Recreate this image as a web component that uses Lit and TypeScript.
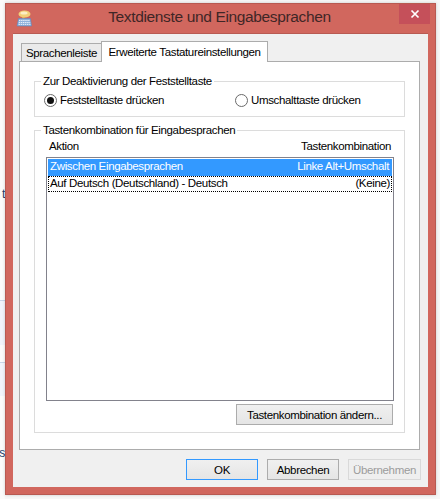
import {LitElement, html, css} from 'lit';
import {customElement} from 'lit/decorators.js';

@customElement('app-root')
export class AppRoot extends LitElement {
    static styles = css`
        :host {
            display: block;
            width: 440px;
            height: 499px;
            overflow: hidden;
            font-family: "Liberation Sans", Arial, sans-serif;
            font-size: 11.5px;
            letter-spacing: -0.35px;
            color: #000;
        }

        .desktop {
            position: relative;
            width: 440px;
            height: 499px;
            box-sizing: border-box;
            padding: 3px 0 0 5px;
            background: #f7f7f7;
        }

        .scraps {
            position: absolute;
            left: 0;
            top: 0;
            width: 5px;
            height: 499px;
            overflow: hidden;
            background: #fbfbfb;
        }

        .band {
            position: absolute;
            left: 0;
            width: 5px;
            box-sizing: border-box;
            background: #f1f4fb;
            border-top: 1px solid #c9d6e8;
        }

        .scrap-text {
            position: absolute;
            right: 0;
            font-size: 12px;
            line-height: 14px;
            color: #1d3f6b;
        }

        .window {
            position: relative;
            box-sizing: border-box;
            width: 431px;
            height: 492px;
            display: flex;
            flex-direction: column;
            background: #d1675e;
            border: 1px solid #b85a52;
            box-shadow: 0 0 3px rgba(0, 0, 0, 0.18);
        }

        .titlebar {
            position: relative;
            flex: none;
            height: 29px;
            display: flex;
            align-items: center;
            justify-content: center;
            padding-right: 2px;
        }

        .icon {
            position: absolute;
            left: 10px;
            top: 6px;
        }

        .title {
            font-size: 15.5px;
            color: #3f2626;
            padding-bottom: 3px;
        }

        .close {
            position: absolute;
            right: 5px;
            top: 0;
            width: 31px;
            height: 20px;
            display: flex;
            align-items: center;
            justify-content: center;
            background: #c5505a;
        }

        .client {
            flex: none;
            box-sizing: border-box;
            width: 415px;
            height: 454px;
            margin-left: 7px;
            padding: 7px 7px 0 6px;
            background: #f0f0f0;
            border-top: 1px solid #b85a52;
            display: flex;
            flex-direction: column;
        }

        .tabs {
            flex: none;
            height: 20px;
            display: flex;
            align-items: flex-end;
            padding-left: 2px;
            position: relative;
            z-index: 1;
        }

        .tab {
            box-sizing: border-box;
            height: 18px;
            display: flex;
            align-items: center;
            justify-content: center;
            white-space: nowrap;
            background: #eaeaea;
            border: 1px solid #acacac;
            border-bottom: none;
        }

        .tab.first {
            width: 81px;
            margin-right: -1px;
        }

        .tab.active {
            width: 167px;
            height: 21px;
            background: #fff;
            margin-bottom: -1px;
        }

        .pane {
            flex: none;
            box-sizing: border-box;
            width: 401px;
            height: 389px;
            padding: 12px 14px 0 14px;
            background: #fff;
            border: 1px solid #acacac;
            display: flex;
            flex-direction: column;
        }

        fieldset {
            margin: 0;
            padding: 0;
            min-width: 0;
            box-sizing: border-box;
            border: 1px solid #dcdcdc;
        }

        legend {
            margin-left: 6px;
            padding: 0 2px;
            line-height: 14px;
        }

        .caps {
            flex: none;
            height: 43px;
        }

        .radios {
            display: flex;
            height: 22px;
            align-items: center;
            padding: 1px 0 0 9px;
        }

        .radio {
            display: flex;
            align-items: center;
            gap: 3px;
            white-space: nowrap;
        }

        .radio.one {
            width: 191px;
        }

        .dot {
            box-sizing: border-box;
            width: 13px;
            height: 13px;
            border-radius: 50%;
            border: 1px solid #6a6a6a;
            background: #fff;
            display: flex;
            align-items: center;
            justify-content: center;
        }

        .dot i {
            width: 7px;
            height: 7px;
            border-radius: 50%;
            background: #111;
        }

        .combo {
            flex: none;
            height: 310px;
            margin-top: 6px;
        }

        .combo-body {
            display: flex;
            flex-direction: column;
            padding: 0 9px 0 11px;
        }

        .head {
            flex: none;
            height: 20px;
            display: flex;
            align-items: center;
            justify-content: space-between;
            padding: 0 4px 3px 3px;
            box-sizing: border-box;
        }

        .list {
            flex: none;
            box-sizing: border-box;
            width: 348px;
            height: 244px;
            border: 1px solid #82828c;
            padding: 1px;
        }

        .row {
            box-sizing: border-box;
            height: 17px;
            display: flex;
            align-items: center;
            justify-content: space-between;
            padding: 0 3px 3px 2px;
            white-space: nowrap;
        }

        .row.sel {
            background: #3399ff;
            color: #fff;
        }

        .row.focus {
            border: 1px dotted #000;
            height: 16px;
            padding: 0 1px 2px 1px;
        }

        .change {
            display: flex;
            justify-content: flex-end;
            padding: 3px 2px 0 0;
        }

        button {
            box-sizing: border-box;
            height: 21px;
            padding: 0;
            font: inherit;
            letter-spacing: inherit;
            color: #000;
            white-space: nowrap;
            background: linear-gradient(#f0f0f0, #e5e5e5);
            border: 1px solid #acacac;
        }

        button.wide {
            width: 157px;
        }

        .actions {
            flex: none;
            display: flex;
            justify-content: flex-end;
            gap: 9px;
            padding: 9px 0 0 0;
            width: 402px;
        }

        .actions button {
            width: 72px;
        }

        .actions button[disabled] {
            width: 73px;
        }

        button.default {
            border: 1px solid #3399ff;
        }

        button[disabled] {
            background: #efefef;
            border-color: #d9d9d9;
            color: #9c9c9c;
        }
    `;

    private renderIcon() {
        return html`
            <svg class="icon" width="16" height="17" viewBox="0 0 16 17">
                <ellipse cx="8.5" cy="4" rx="6" ry="3.6" fill="#f2cf78"/>
                <ellipse cx="8" cy="3" rx="3.6" ry="1.6" fill="#fbeec4"/>
                <path d="M6 7 L9 7 L7 10 Z" fill="#e6b95c"/>
                <path d="M2.5 8.5 L14.5 8.5 L15.5 16 L1 16 Z" fill="#8fb1dc" stroke="#5f86bd" stroke-width="0.6"/>
                <path d="M3 10.5 H14 M2.8 12.5 H14.2 M2.6 14.4 H14.4" stroke="#e6eefa" stroke-width="1" stroke-dasharray="1.4 0.7"/>
            </svg>
        `;
    }

    render() {
        return html`
            <div class="desktop">
                <div class="scraps">
                    <span class="scrap-text" style="top: 187px">t</span>
                    <div class="band" style="top: 300px; height: 45px"></div>
                    <div class="band" style="top: 362px; height: 34px"></div>
                    <span class="scrap-text" style="top: 446px">s</span>
                </div>
                <div class="window">
                    <div class="titlebar">
                        ${this.renderIcon()}
                        <span class="title">Textdienste und Eingabesprachen</span>
                        <div class="close">
                            <svg width="10" height="10" viewBox="0 0 10 10">
                                <path d="M1.5 1.5 L8.5 8.5 M8.5 1.5 L1.5 8.5" stroke="#fff" stroke-width="1.7"/>
                            </svg>
                        </div>
                    </div>
                    <div class="client">
                        <div class="tabs">
                            <div class="tab first">Sprachenleiste</div>
                            <div class="tab active">Erweiterte Tastatureinstellungen</div>
                        </div>
                        <div class="pane">
                            <fieldset class="caps">
                                <legend>Zur Deaktivierung der Feststelltaste</legend>
                                <div class="radios">
                                    <label class="radio one"><span class="dot"><i></i></span>Feststelltaste drücken</label>
                                    <label class="radio"><span class="dot"></span>Umschalttaste drücken</label>
                                </div>
                            </fieldset>
                            <fieldset class="combo">
                                <legend>Tastenkombination für Eingabesprachen</legend>
                                <div class="combo-body">
                                    <div class="head">
                                        <span>Aktion</span>
                                        <span>Tastenkombination</span>
                                    </div>
                                    <div class="list">
                                        <div class="row sel">
                                            <span>Zwischen Eingabesprachen</span>
                                            <span>Linke Alt+Umschalt</span>
                                        </div>
                                        <div class="row focus">
                                            <span>Auf Deutsch (Deutschland) - Deutsch</span>
                                            <span>(Keine)</span>
                                        </div>
                                    </div>
                                    <div class="change">
                                        <button class="wide">Tastenkombination ändern...</button>
                                    </div>
                                </div>
                            </fieldset>
                        </div>
                        <div class="actions">
                            <button class="default">OK</button>
                            <button>Abbrechen</button>
                            <button disabled>Übernehmen</button>
                        </div>
                    </div>
                </div>
            </div>
        `;
    }
}
